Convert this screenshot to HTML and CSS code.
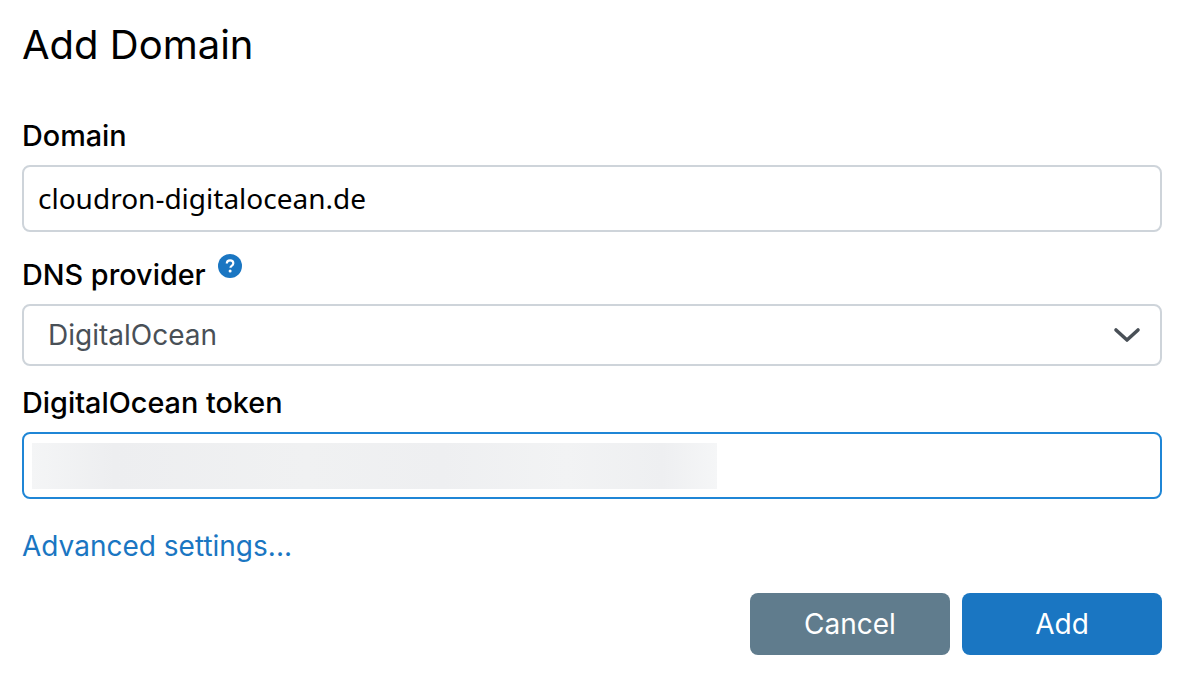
FILE: index.html
```html
<!DOCTYPE html>
<html lang="en">
<head>
    <meta charset="UTF-8">
    <meta name="viewport" content="width=device-width, initial-scale=1.0">
    <title>Add Domain</title>
    <link rel="stylesheet" href="styles.css">
</head>
<body>
    <div class="dialog">
        <h1 class="title">Add Domain</h1>

        <label class="field-label label-domain">Domain</label>
        <div class="text-input">cloudron-digitalocean.de</div>

        <label class="field-label label-provider">DNS provider
            <svg class="help-icon" width="24" height="24" viewBox="0 0 24 24">
                <circle cx="12" cy="12" r="12" fill="#1a76c2"/>
                <path d="M8.8 9.6c0-2 1.4-3.2 3.3-3.2 1.9 0 3.2 1.1 3.2 2.8 0 1.3-.7 2-1.7 2.7-.8.5-1.1.9-1.1 1.8" fill="none" stroke="#fff" stroke-width="2.2"/>
                <circle cx="12.1" cy="17" r="1.5" fill="#fff"/>
            </svg>
        </label>
        <div class="select-input">
            <span>DigitalOcean</span>
            <svg class="chevron" width="28" height="18" viewBox="0 0 28 18">
                <path d="M3 4l11 10L25 4" fill="none" stroke="#495057" stroke-width="3.6" stroke-linecap="round" stroke-linejoin="round"/>
            </svg>
        </div>

        <label class="field-label label-token">DigitalOcean token</label>
        <div class="text-input token-input">
            <div class="token-blur"></div>
        </div>

        <a class="advanced-link" href="#">Advanced settings...</a>

        <div class="actions">
            <button class="btn btn-cancel">Cancel</button>
            <button class="btn btn-add">Add</button>
        </div>
    </div>
</body>
</html>
```

FILE: styles.css
```css
/* Basic Styling */
body {
    font-family: Inter, "Noto Sans", sans-serif;
    margin: 0;
    padding: 0;
    background-color: #ffffff;
    color: #000000;
}

.dialog {
    width: 1140px;
    padding: 22px 20px 0 22px;
}

.title {
    margin: 0;
    font-size: 40px;
    font-weight: 400;
    line-height: 46px;
}

.field-label {
    display: block;
    font-size: 28.8px;
    font-weight: 450;
    line-height: 34px;
}

.label-domain {
    margin-top: 51px;
}

.label-provider {
    margin-top: 22px;
}

.label-token {
    margin-top: 20px;
}

.help-icon {
    vertical-align: 7px;
    margin-left: 5px;
}

.text-input {
    box-sizing: border-box;
    height: 67px;
    margin-top: 12px;
    padding: 0 14px 2px;
    display: flex;
    align-items: center;
    border: 2px solid #ced4da;
    border-radius: 8px;
    font-family: "Noto Sans", sans-serif;
    font-size: 28px;
}

.select-input {
    box-sizing: border-box;
    height: 62px;
    margin-top: 12px;
    padding: 0 19px 0 24px;
    display: flex;
    align-items: center;
    justify-content: space-between;
    border: 2px solid #ced4da;
    border-radius: 8px;
    font-size: 28px;
    color: #495057;
}

.token-input {
    padding: 0 8px;
    border-color: #1f86d6;
}

.token-blur {
    width: 685px;
    height: 46px;
    background: linear-gradient(90deg, #f4f5f6, #edeef0 12%, #f0f1f2 40%, #eeeff1 60%, #f2f3f4 78%, #eeeff1 92%, #f5f6f7);
}

.advanced-link {
    display: block;
    margin-top: 30px;
    font-size: 28px;
    line-height: 34px;
    color: #1a76c2;
    text-decoration: none;
}

.actions {
    display: flex;
    justify-content: flex-end;
    gap: 12px;
    margin-top: 30px;
}

.btn {
    width: 200px;
    height: 62px;
    border: none;
    border-radius: 8px;
    color: #ffffff;
    font-family: Inter, sans-serif;
    font-size: 28px;
}

.btn-cancel {
    background-color: #607c8d;
}

.btn-add {
    background-color: #1a76c2;
}
```
